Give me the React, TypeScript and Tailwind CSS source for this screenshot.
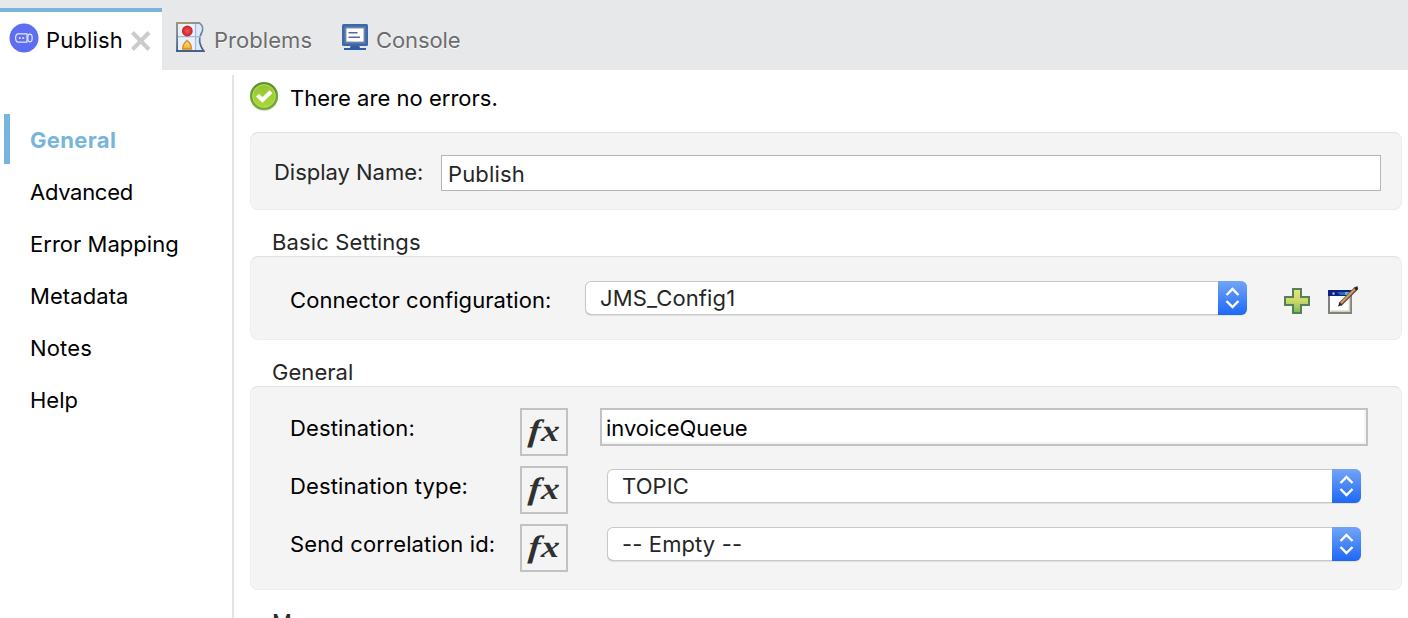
import { ReactNode, useId } from "react";

function PublishIcon() {
  return (
    <svg width="30" height="30" viewBox="0 0 30 30" className="shrink-0">
      <circle cx="15" cy="15" r="14.5" fill="#5d6ef0" />
      <g fill="none" stroke="#e6e9ff" strokeWidth="1.2">
        <path d="M18 10.800H9.300C7 10.800 6.600 12.600 6.600 15s.4 4.200 2.700 4.200H18z" />
        <ellipse cx="21" cy="15" rx="2.200" ry="3.800" />
      </g>
      <path d="M9.800 14.200h2v1.600h-2zM13.200 14.200h2v1.600h-2z" fill="#e6e9ff" />
    </svg>
  );
}

function ProblemsIcon() {
  return (
    <svg width="30" height="30" viewBox="0 0 30 30" className="shrink-0">
      <defs>
        <linearGradient id="pf" x1="0" y1="0" x2="0.6" y2="1">
          <stop offset="0" stopColor="#ad9a5c" />
          <stop offset="0.5" stopColor="#8090ab" />
          <stop offset="1" stopColor="#46608e" />
        </linearGradient>
        <linearGradient id="pa" x1="0" y1="0" x2="0" y2="1">
          <stop offset="0" stopColor="#ffe58d" />
          <stop offset="1" stopColor="#f4ac27" />
        </linearGradient>
        <radialGradient id="pr">
          <stop offset="0" stopColor="#ee5a50" />
          <stop offset="1" stopColor="#c92026" />
        </radialGradient>
      </defs>
      <path d="M1 1h22.500c3.500 2.500 4 7 1.500 11-2.500 4.500-2 10 2.500 17H1z" fill="#dcecfa" stroke="url(#pf)" strokeWidth="1.800" />
      <path d="M2 14.800h23M19.500 2v26" stroke="#a4bcdc" strokeWidth="1.400" fill="none" />
      <path d="M2 2h16.800v12H2zM2 15.500h16.800V28H2z" fill="#e9f2fb" />
      <path d="M0 0h2v30H0z" fill="url(#pf)" />
      <circle cx="11.300" cy="9" r="5.400" fill="url(#pr)" />
      <path d="M11 18.500c-2.300 1.800-4.300 4.600-4.300 8.500h8.800c0-3.900-2-6.700-4.500-8.500z" fill="url(#pa)" stroke="#d58a26" strokeWidth="1.400" />
      <path d="M0 29h28.500" stroke="#465f8b" strokeWidth="2" />
    </svg>
  );
}

function ConsoleIcon() {
  return (
    <svg width="26" height="26" viewBox="0 0 26 26" className="shrink-0">
      <rect width="26" height="22" rx="1.500" fill="#3c67af" />
      <rect x="2" y="2" width="22" height="18" fill="#4d72ae" />
      <rect x="3.800" y="3.800" width="18.400" height="14.400" fill="#fff" stroke="#75818f" strokeWidth="1.200" />
      <path d="M6.500 8.800h9M6.500 13.200h11.500" stroke="#56699b" strokeWidth="1.600" />
      <path d="M8.500 22h9v2h-9z" fill="#355995" />
      <path d="M2 24h6v-.8h10V24h6v2H2z" fill="#315da8" />
    </svg>
  );
}

function CheckIcon() {
  return (
    <svg width="30" height="30" viewBox="0 0 30 30" className="shrink-0">
      <defs>
        <linearGradient id="ok" x1="0" y1="0" x2="0" y2="1">
          <stop offset="0" stopColor="#96c234" />
          <stop offset="1" stopColor="#aadb36" />
        </linearGradient>
        <linearGradient id="okr" x1="0" y1="0" x2="0" y2="1">
          <stop offset="0" stopColor="#5b912f" />
          <stop offset="1" stopColor="#76ab38" />
        </linearGradient>
      </defs>
      <circle cx="14.200" cy="16" r="13.800" fill="#c4d4b8" />
      <circle cx="14" cy="15" r="12.900" fill="url(#ok)" stroke="url(#okr)" strokeWidth="2.200" />
      <circle cx="14" cy="15" r="11.200" fill="none" stroke="#b4dc5a" strokeWidth="1" />
      <path d="M7.500 14.200l5 4.800L21 10.800" fill="none" stroke="#fff" strokeWidth="4" />
    </svg>
  );
}

function PlusIcon() {
  return (
    <svg width="26" height="26" viewBox="0 0 26 26" className="shrink-0">
      <defs>
        <linearGradient id="pl" x1="0" y1="0" x2="0" y2="1">
          <stop offset="0" stopColor="#e6e37b" />
          <stop offset="0.5" stopColor="#cbd968" />
          <stop offset="1" stopColor="#74b954" />
        </linearGradient>
      </defs>
      <path d="M9 1h8v8h8v8h-8v8H9v-8H1V9h8z" fill="url(#pl)" stroke="#568057" strokeWidth="2" />
    </svg>
  );
}

function EditIcon() {
  return (
    <svg width="30" height="28" viewBox="0 0 30 28" className="shrink-0">
      <path d="M1 10v17h22V10" fill="#fff" stroke="#81817e" strokeWidth="2" />
      <path d="M2.500 25.200h19V10" fill="none" stroke="#d2cfb5" strokeWidth="1.600" />
      <path d="M0 4h24v6H0z" fill="#102284" />
      <path d="M9 6h13v3H12z" fill="#2c69b5" />
      <path d="M17 6h5v3h-5z" fill="#55b5d8" />
      <path d="M4.500 6.500h2v2h-2z" fill="#d5e2f5" />
      <path d="M12 18.500L28.500 2" stroke="#6b513b" strokeWidth="4" />
      <path d="M13 17L27 3" stroke="#cf9b63" strokeWidth="1.900" />
      <path d="M10 20.500l1.500-4 2.500 2.500zM26.500 2l3-2 .5 3-2 1.500z" fill="#222" />
    </svg>
  );
}

function Tab({ icon, label, className }: { icon: ReactNode; label: string; className: string }) {
  return (
    <div className={`flex items-center text-[#6c6c6c] [text-shadow:0_1px_1px_#fff] ${className}`}>
      {icon}
      {label}
    </div>
  );
}

function Select({ value, className }: { value: string; className: string }) {
  const id = useId();
  return (
    <div className={`flex h-[34px] rounded-[6px] bg-white text-[#262626] shadow-[inset_0_0_0_1px_#c8c8c8,inset_0_-1px_0_#b5b5b5,0_1px_1px_#dedede] ${className}`}>
      <span className="grow pl-[15px] leading-[34px] tracking-[0.12px]">{value}</span>
      <svg width="29" height="34" viewBox="0 0 29 34" className="shrink-0">
        <defs>
          <linearGradient id={id} x1="0" y1="0" x2="0" y2="1">
            <stop offset="0" stopColor="#72a5f6" />
            <stop offset="1" stopColor="#1d68f6" />
          </linearGradient>
        </defs>
        <path d="M0 0h23a6 6 0 0 1 6 6v22a6 6 0 0 1-6 6H0z" fill={`url(#${id})`} />
        <path d="M8.500 14l6-6 6 6M8.500 20l6 6 6-6" fill="none" stroke="#fff" strokeWidth="2.400" />
      </svg>
    </div>
  );
}

function Fx() {
  return (
    <div className="size-12 shrink-0 border-2 border-[#c2c2c2] pl-[11px] font-['Liberation_Serif',serif] text-[31px] leading-[41px] font-bold text-[#303030] italic">
      <span className="inline-block origin-right scale-x-[1.16] -skew-x-4 tracking-[1px]">fx</span>
    </div>
  );
}

function Row({ label, children }: { label: string; children: ReactNode }) {
  return (
    <div className="flex h-[58px] items-start pl-[39px]">
      <span className="w-[230px] shrink-0 leading-10 tracking-[0.14px]">{label}</span>
      <Fx />
      {children}
    </div>
  );
}

const panel = "rounded-[8px] border border-[#ededed] border-t-[#e0e0e0] bg-[#f4f4f4]";

export default function App() {
  return (
    <div className="flex h-[618px] w-[1408px] flex-col overflow-hidden bg-white font-['Inter',sans-serif] text-[22px] leading-[26px] tracking-[0.15px] text-black">
      <header className="flex h-[70px] shrink-0 bg-[#e7e8ea]">
        <div className="mt-2 flex w-[162px] items-center border-t-4 border-[#78b5dc] bg-white pb-0.5 pl-[9px]">
          <span className="-mt-1"><PublishIcon /></span>
          <span className="ml-[7px] w-[84px] tracking-[0.15px]">Publish</span>
          <svg width="22" height="20" viewBox="0 0 22 20" className="mt-px shrink-0">
            <path d="M2.500 1.500l16.500 17M19 1.500l-16.500 17" stroke="#cbcbcb" strokeWidth="4" />
          </svg>
        </div>
        <div className="flex pt-[10px] pl-[14px]">
          <Tab icon={<span className="mr-2 -mt-1.5"><ProblemsIcon /></span>} label="Problems" className="w-[166px] tracking-[0.05px]" />
          <Tab icon={<span className="mr-2 -mt-1.5"><ConsoleIcon /></span>} label="Console" className="tracking-[-0.1px]" />
        </div>
      </header>
      <div className="flex min-h-0 grow">
        <nav className="mt-[5px] flex w-[234px] shrink-0 flex-col border-r-2 border-[#e4e4e4] pt-[39px]">
          <div className="ml-1 h-[50px] border-l-[6px] border-[#78b5dc] pl-5 leading-[52px] font-bold tracking-[0.35px] text-[#78b5dc]">General</div>
          <ul className="pt-0.5 pl-[30px] leading-[52px]">
            <li className="tracking-[-0.3px]">Advanced</li>
            <li className="tracking-[0.02px]">Error Mapping</li>
            <li className="tracking-[0.08px]">Metadata</li>
            <li>Notes</li>
            <li className="tracking-[0px]">Help</li>
          </ul>
        </nav>
        <main className="flex w-[1168px] flex-col pl-4">
          <div className="flex h-[62px] shrink-0 items-start pt-[11px]">
            <CheckIcon />
            <span className="mt-1 ml-[10px] tracking-[0.02px]">There are no errors.</span>
          </div>
          <section className={`flex h-[78px] shrink-0 items-start pl-[23px] text-[#262626] ${panel}`}>
            <span className="mt-[26px] w-[167px] tracking-[-0.02px]">Display Name:</span>
            <div className="mt-[22px] h-9 w-[940px] border border-[#b5b5b5] bg-white pl-1.5 leading-9">Publish</div>
          </section>
          <h2 className="mt-[19px] h-[27px] shrink-0 pl-[22px] text-[#262626]">Basic Settings</h2>
          <section className={`flex h-[84px] shrink-0 items-start pl-[39px] ${panel}`}>
            <span className="mt-[30px] w-[295px] tracking-[0.07px]">Connector configuration:</span>
            <Select value="JMS_Config1" className="mt-6 w-[662px]" />
            <span className="mt-[31px] ml-[37px]"><PlusIcon /></span>
            <span className="mt-[29px] ml-[18px]"><EditIcon /></span>
          </section>
          <h2 className="mt-[19px] h-[27px] shrink-0 pl-[22px] tracking-[0.05px] text-[#262626]">General</h2>
          <section className={`h-[204px] shrink-0 pt-[21px] ${panel}`}>
            <Row label="Destination:">
              <div className="ml-8 h-[38px] w-[768px] border-2 border-[#c2c2c2] bg-white pl-1 leading-9 tracking-[-0.06px] shadow-[inset_-2px_-2px_0_#f4f4f4]">invoiceQueue</div>
            </Row>
            <Row label="Destination type:">
              <Select value="TOPIC" className="mt-[3px] ml-[39px] w-[754px]" />
            </Row>
            <Row label="Send correlation id:">
              <Select value="-- Empty --" className="mt-[3px] ml-[39px] w-[754px]" />
            </Row>
          </section>
          <h2 className="mt-[19px] shrink-0 pl-[22px] text-[#262626]">Message</h2>
        </main>
      </div>
    </div>
  );
}
